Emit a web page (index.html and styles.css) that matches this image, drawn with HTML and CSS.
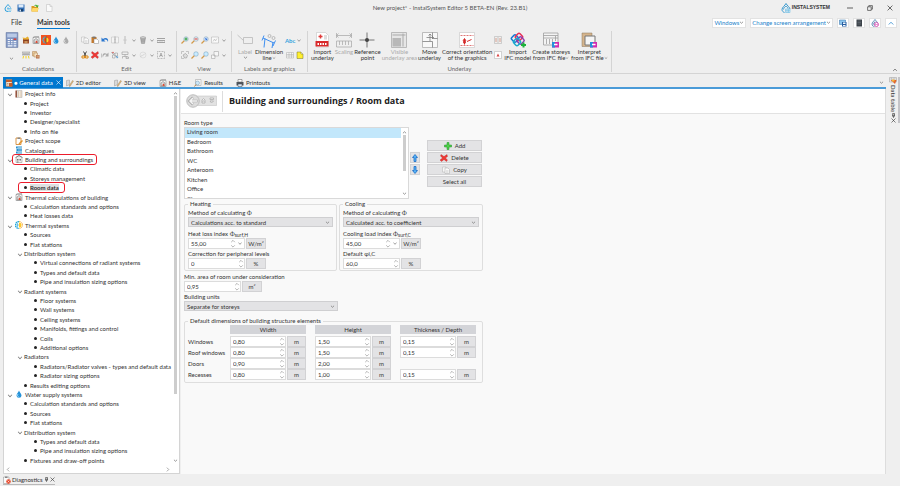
FILE: index.html
```html
<!DOCTYPE html>
<html lang="en">
<head>
    <meta charset="UTF-8">
    <meta name="viewport" content="width=device-width, initial-scale=1.0">
    <title>New project* - InstalSystem Editor 5</title>
    <link rel="stylesheet" href="styles.css">
</head>
<body>
    <svg class="sprite" aria-hidden="true">
        <symbol id="caret" viewBox="0 0 8 8"><path d="M1.5 2.8L4 5.2 6.500 2.800" fill="none" stroke="#777" stroke-width="1.200"/></symbol>
        <symbol id="caret-up" viewBox="0 0 8 8"><path d="M1.500 5.200L4 2.800 6.500 5.200" fill="none" stroke="#777" stroke-width="1.200"/></symbol>
        <symbol id="close" viewBox="0 0 10 10"><path d="M1 1l8 8M9 1L1 9" fill="none" stroke="currentColor" stroke-width="1.200"/></symbol>
        <symbol id="pin" viewBox="0 0 8 10"><path d="M2 1h4v5H2zM1 6h6M4 6v4M5 1v5" fill="none" stroke="#444" stroke-width="1.200"/></symbol>
        <symbol id="spin" viewBox="0 0 6 10"><path d="M1 3.500L3 1.500 5 3.500M1 7L3 9 5 7" fill="none" stroke="#999" stroke-width=".8"/></symbol>
        <symbol id="save" viewBox="0 0 16 16"><path d="M1 1h14v14H1z" fill="#2f6db5"/><path d="M3 1h10v6H3z" fill="#dcebfa"/><path d="M4 10h8v5H4z" fill="#16406f"/><path d="M5 11h3v4H5z" fill="#cfe0f2"/></symbol>
        <symbol id="folder" viewBox="0 0 16 16"><path d="M1 4h5l2 2h6v9H1z" fill="#d99a1e"/><path d="M3 8h13l-3 7H1z" fill="#ffd869"/><path d="M6 4c2-4 6-3 7-1l2-1-1 5-5-2 2-1c-1-1-3-1-5 0z" fill="#4caf2f"/></symbol>
        <symbol id="page" viewBox="0 0 16 16"><path d="M3 1h7l4 4v10H3z" fill="#fafafa" stroke="#bbb"/><path d="M10 1v4h4" fill="none" stroke="#bbb"/></symbol>
        <symbol id="app" viewBox="0 0 16 16"><path d="M8 1C5 5 2 7 2 10a5.500 5 0 0 0 6 5M8 1c2 3 4 4 5 6" fill="none" stroke="#2d9fdc" stroke-width="2"/><path d="M6 9h9M9 12h6M8 15h6M8 6v6" stroke="#49b4e8" stroke-width="1.300" fill="none"/></symbol>
        <symbol id="logo" viewBox="0 0 20 20"><path d="M10 1C8 5 2 9 2 13c0 3 2 5 5 6M10 1c2 4 8 8 8 11M5 13c0-3 3-5 5-7 2 2 4 3 4 5" fill="none" stroke="#2590cb" stroke-width="1.800"/><path d="M9 12h9v7H9zM12 12v7M15 12v7M9 15.500h9" fill="none" stroke="#53b5e4"/></symbol>
        <symbol id="calc" viewBox="0 0 24 30"><path d="M1 1h22v28H1z" fill="#7f96c4" stroke="#5e719b"/><path d="M3 3h18v7H3z" fill="#b9c9e6"/><path d="M4 13h4v2H4zM10 13h3v2h-3zM4 17h4v2H4zM10 17h3v2h-3zM15 17h5v2h-5zM4 21h4v2H4zM10 21h3v2h-3zM15 21h5v2h-5zM4 25h9v2H4zM15 25h5v2h-5z" fill="#f4f7fc"/><path d="M15 12h5v3h-5z" fill="#d4453b"/></symbol>
        <symbol id="boiler" viewBox="0 0 16 16"><path d="M2 6h12v9H2z" fill="#a0522d"/><path d="M1 3l6 1 4-3 3 3-1 3H3z" fill="#e7af31"/><path d="M3 9h10" stroke="#6d2f16"/><path d="M5 11h6v2H5z" fill="#f3d086"/></symbol>
        <symbol id="house" viewBox="0 0 16 16"><path d="M2 5l6-4 6 4v10H2z" fill="#eee" stroke="#888"/><path d="M4 8h3v3H4zM9 8h3v3H9zM4 13h3v2H4z" fill="#777"/><path d="M1 5l7-4 7 4" stroke="#6c6c6c" fill="none" stroke-width="1.500"/></symbol>
        <symbol id="house-red" viewBox="0 0 16 16"><path d="M2 3h12v12H2z" fill="#f6f6f6" stroke="#777"/><path d="M4 8l4-3 4 3v6H4z" fill="#ddd" stroke="#666"/><path d="M9 9c3 3 3 5 0 5s-3-2 0-5" fill="#df4630"/><path d="M2 3l3-2h9" stroke="#777" fill="none"/></symbol>
        <symbol id="sun" viewBox="0 0 16 16"><path d="M8 1a7 7 0 0 0 0 14" fill="none" stroke="#21a8dc" stroke-width="3" stroke-dasharray="3 1"/><path d="M8 3a5 5 0 0 1 0 10z" fill="#ffc928"/><path d="M8 1a7 7 0 0 1 0 14" fill="none" stroke="#f49b1b" stroke-width="2" stroke-dasharray="2 1"/><path d="M3 8h5M5 4v8" stroke="#1597cc"/></symbol>
        <symbol id="thermal" viewBox="0 0 16 16"><path d="M8 2a6 6 0 0 0 0 12" fill="none" stroke="#35bfe6" stroke-width="2.500" stroke-dasharray="3 1"/><path d="M8 3a5 5 0 0 1 0 10z" fill="#ffd92e"/><path d="M8 1v14" stroke="#5b3b22" stroke-width="1.500"/></symbol>
        <symbol id="drop" viewBox="0 0 16 16"><path d="M8 1c1 4 5 6 5 10a5 4.500 0 0 1-10 0c0-4 4-6 5-10z" fill="#2492d9"/><path d="M6 8c-2 3-1 5 1 5" fill="none" stroke="#c7ecff" stroke-width="1.500"/></symbol>
        <symbol id="drop-grey" viewBox="0 0 16 16"><path d="M8 1c1 4 5 6 5 10a5 4.500 0 0 1-10 0c0-4 4-6 5-10z" fill="#aaa"/><path d="M6 8c-2 3-1 5 1 5" fill="none" stroke="#eee" stroke-width="1.500"/></symbol>
        <symbol id="printer2" viewBox="0 0 16 16"><path d="M0 2h16v6H0z" fill="#d8d8d8" stroke="#888"/><path d="M2 6h12" stroke="#666"/><path d="M3 10l-1 5M8 10v5M13 10l1 5" stroke="#f3d11c" stroke-width="2"/></symbol>
        <symbol id="layers" viewBox="0 0 16 16"><path d="M1 1h8v9H1z" fill="#eacb9b" stroke="#a97c4a"/><path d="M4 4h7v8H4z" fill="#f5e1c1" stroke="#a97c4a"/><path d="M8 8h7v7H8z" fill="#b56d45"/><path d="M9 10h5M9 12h5" stroke="#f3d9b2"/></symbol>
        <symbol id="copy" viewBox="0 0 16 16"><path d="M1 2h7v10H1z" fill="#f6f6f6" stroke="#b2b2b2"/><path d="M6 4h6l3 3v8H6z" fill="#fafafa" stroke="#a8a8a8"/><path d="M8 9h5M8 11h5M8 13h5" stroke="#ccc"/></symbol>
        <symbol id="paste" viewBox="0 0 16 16"><path d="M1 2h10v12H1z" fill="#c57a2d"/><path d="M3 1h6v3H3z" fill="#777"/><path d="M6 6h6l3 3v6H6z" fill="#fff" stroke="#888"/></symbol>
        <symbol id="undo" viewBox="0 0 16 16"><path d="M1 3v8h8L6 8c3-2 6-1 8 4 2-8-5-10-10-6z" fill="#2b77cf"/></symbol>
        <symbol id="mirror" viewBox="0 0 16 16"><path d="M1 2h6v12H1zM9 2h6v12H9z" fill="#f4f4f4" stroke="#bbb"/><path d="M8 0v16" stroke="#888" stroke-dasharray="2 1"/></symbol>
        <symbol id="split" viewBox="0 0 16 16"><path d="M8 0v6M8 10v6M5 8h6" stroke="#aaa" stroke-width="1.500"/><circle cx="8" cy="8" r="2" fill="#ccc"/></symbol>
        <symbol id="bucket" viewBox="0 0 16 16"><path d="M3 4h10l-2 11H5z" fill="#b9b9b9" stroke="#888"/><path d="M2 3l6-2 6 2M6 6v7M10 6v7" fill="none" stroke="#777"/></symbol>
        <symbol id="lines" viewBox="0 0 16 16"><path d="M0 5h16M0 9h16M0 13h16" stroke="#888" stroke-width="1.500"/><path d="M1 9v4M6 9v4M10 9v4M15 9v4" stroke="#aaa"/></symbol>
        <symbol id="cut" viewBox="0 0 16 16"><path d="M5 1l5 9M11 1L6 10" stroke="#444" stroke-width="2"/><path d="M2 10h5v4H2zM9 10h5v4H9z" fill="none" stroke="#df8b17" stroke-width="2"/></symbol>
        <symbol id="delete" viewBox="0 0 16 16"><path d="M2 1l6 4 6-4 1 4-4 3 4 4-2 3-5-4-5 4-3-3 5-4-4-4z" fill="#ee3835" stroke="#a91414" stroke-width=".6"/></symbol>
        <symbol id="redo" viewBox="0 0 16 16"><path d="M15 3v8H8l3-3C8 6 5 7 4 13 1 7 6 2 12 6z" fill="#aaa"/><path d="M1 5v8" stroke="#999"/></symbol>
        <symbol id="select" viewBox="0 0 16 16"><path d="M1 3l6 2-2 2zM8 4h5v6H8zM3 8h5v6H3z" fill="#f2f2f2" stroke="#888"/><path d="M9 9l6 3-3 3z" fill="#5a9bcf"/><circle cx="4" cy="3" r="1.500" fill="#d9534f"/></symbol>
        <symbol id="connect" viewBox="0 0 16 16"><path d="M2 2h12v5H2zM8 7v4M3 11h10M3 11v4M10 12h5v3h-5z" fill="none" stroke="#999" stroke-width="1.200"/></symbol>
        <symbol id="round" viewBox="0 0 16 16"><circle cx="8" cy="8" r="6" fill="none" stroke="#ccc"/><path d="M3 12c2-5 5-1 9-7" fill="none" stroke="#bbb"/></symbol>
        <symbol id="area" viewBox="0 0 16 16"><path d="M1 1h14v14H1z" fill="none" stroke="#888" stroke-dasharray="2 1"/><path d="M5 12l3-8 3 8M6 9h4" fill="none" stroke="#777"/></symbol>
        <symbol id="zoom-in" viewBox="0 0 16 16"><path d="M7 9l-6 6" stroke="#d29a4b" stroke-width="2.500"/><circle cx="10" cy="6" r="4.500" fill="#d9eefb" stroke="#7d99ad"/><path d="M10 3v6M7 6h6" stroke="#2e9d35" stroke-width="2"/></symbol>
        <symbol id="zoom-out" viewBox="0 0 16 16"><path d="M7 9l-6 6" stroke="#d29a4b" stroke-width="2.500"/><circle cx="10" cy="6" r="4.500" fill="#e8eef3" stroke="#7d99ad"/><path d="M7 6h6" stroke="#d83b34" stroke-width="2"/></symbol>
        <symbol id="zoom-win" viewBox="0 0 16 16"><path d="M7 9l-6 6" stroke="#d29a4b" stroke-width="2.500"/><circle cx="10" cy="6" r="4.500" fill="#cfe4ff" stroke="#7d99ad"/><path d="M8 4l5 2-3 3z" fill="#2464cf"/></symbol>
        <symbol id="zoom-all" viewBox="0 0 16 16"><path d="M7 9l-6 6" stroke="#d29a4b" stroke-width="2.500"/><circle cx="10" cy="6" r="4.500" fill="#c9ebff" stroke="#6f9cba"/></symbol>
        <symbol id="frame" viewBox="0 0 16 16"><path d="M1 2h14v12H1z" fill="#fafafa" stroke="#aaa"/><path d="M4 11l3-5 2 4 3-5" fill="none" stroke="#aaa"/></symbol>
        <symbol id="hand" viewBox="0 0 16 16"><path d="M1 6V1h5M10 1h5v5M1 10v5h5" fill="none" stroke="#999"/><path d="M4 8l5-3 4 4-2 5H7z" fill="#ddd" stroke="#888"/></symbol>
        <symbol id="squares" viewBox="0 0 16 16"><path d="M6 1h9v9H6zM1 8h7v7H1z" fill="#f6f6f6" stroke="#999"/></symbol>
        <symbol id="label" viewBox="0 0 32 32"><path d="M13 11h18v12H13zM13 17L1 6" fill="none" stroke="#b5b5b5" stroke-width="1.500"/></symbol>
        <symbol id="dimension" viewBox="0 0 32 32"><path d="M4 12l22 10M6 7L2 17M29 17l-5 11M8 13l-2 18M24 20l-2 12" fill="none" stroke="#3f8ff0" stroke-width="2"/><circle cx="17" cy="8" r="3" fill="none" stroke="#aaa" stroke-width="1.500"/><circle cx="25" cy="12" r="3" fill="none" stroke="#aaa" stroke-width="1.500"/></symbol>
        <symbol id="grid" viewBox="0 0 16 16"><path d="M1 3h14v11H1zM1 7h14M1 10h14M6 3v11M11 3v11" fill="#f7f7f7" stroke="#aaa"/></symbol>
        <symbol id="note" viewBox="0 0 16 16"><path d="M2 2h8l4 4v9H2z" fill="#fff02f" stroke="#77732d"/><path d="M10 2v4h4" fill="#fff" stroke="#77732d"/></symbol>
        <symbol id="import" viewBox="0 0 32 32"><path d="M5 1h18l6 6v23H5z" fill="#fff" stroke="#bbb"/><path d="M3 18h26v11H3z" fill="#d9292b"/><path d="M7 24h18" stroke="#fff" stroke-width="4" stroke-dasharray="3 2"/><path d="M9 9h8M13 5v8" stroke="#e03c3c" stroke-width="3"/><path d="M20 6h6v9h-6z" fill="#ddd"/></symbol>
        <symbol id="scaling" viewBox="0 0 32 32"><path d="M1 7h30M1 2v10M31 2v10M5 3L1 7l4 4M27 3l4 4-4 4M1 18h30v12H1zM7 18v8M13 18v8M19 18v8M25 18v8" fill="none" stroke="#aaa" stroke-width="1.500"/></symbol>
        <symbol id="refpoint" viewBox="0 0 32 32"><path d="M16 1v30M1 16h30" stroke="#777" stroke-width="2"/><circle cx="16" cy="16" r="4" fill="#444"/></symbol>
        <symbol id="visible" viewBox="0 0 32 32"><path d="M1 1h30v30H1z" fill="#e6e6e6" stroke="#aaa" stroke-width="1.500"/><path d="M3 12h17v17H3z" fill="#b8b8b8"/><path d="M3 6h26M24 3v26" stroke="#aaa" stroke-width="2"/></symbol>
        <symbol id="move" viewBox="0 0 32 32"><path d="M1 1h30v30H1z" fill="#f8f8f8" stroke="#aaa" stroke-width="1.500"/><path d="M1 19h20v12M21 1v12h10M16 4v14M9 11h14M13 7l3-3 3 3M20 8l3 3-3 3" fill="none" stroke="#777" stroke-width="1.500"/></symbol>
        <symbol id="orient" viewBox="0 0 32 32"><path d="M1 1h30v30H1z" fill="#fff" stroke="#bbb"/><path d="M3 7h26M3 27h26" stroke="#df7777" stroke-width="2" stroke-dasharray="4 2"/><path d="M11 25V14M8 18l3-5 3 5M16 19l9-4" fill="none" stroke="#d42828" stroke-width="2"/><circle cx="11" cy="20" r="3" fill="#d42828"/></symbol>
        <symbol id="redpage" viewBox="0 0 16 16"><path d="M1 1h14v14H1z" fill="#f1efee" stroke="#aaa"/><path d="M4 4v8M12 4v8" stroke="#c98470" stroke-width="1.500"/><path d="M8 2v12" stroke="#999"/></symbol>
        <symbol id="redpoint" viewBox="0 0 16 16"><path d="M1 1h14v14H1z" fill="#fff" stroke="#aaa"/><path d="M5 11l3-6 3 6z" fill="#d84545"/></symbol>
        <symbol id="ifc" viewBox="0 0 32 32"><g fill="none" stroke-width="3"><rect x="4" y="7" width="12" height="12" rx="3" transform="rotate(45 10 13)" stroke="#1478d4"/><rect x="12" y="4" width="12" height="12" rx="3" transform="rotate(45 18 10)" stroke="#e72e56"/><rect x="15" y="11" width="12" height="12" rx="3" transform="rotate(45 21 17)" stroke="#8e3eb2"/><rect x="8" y="14" width="12" height="12" rx="3" transform="rotate(45 14 20)" stroke="#18aacb"/></g><path d="M27 21v10M22 26h10" stroke="#1cb33b" stroke-width="4"/></symbol>
        <symbol id="storeys" viewBox="0 0 32 32"><path d="M1 2h29v24H1z" fill="#f4f4f4" stroke="#999" stroke-width="1.500"/><path d="M1 7h29M1 12h29M7 14v10M13 14v10M19 14v10M25 8v10" stroke="#999" stroke-width="1.500"/><path d="M18 20h14v11H18z" fill="#d12cb0"/><path d="M18 20h6v11h-6z" fill="#278fd9"/><path d="M22 25h7" stroke="#fff" stroke-width="3"/></symbol>
        <symbol id="interpret" viewBox="0 0 32 32"><path d="M2 2h20v27H2z" fill="#d5b48c" stroke="#8a745b"/><path d="M8 8h20v18H8z" fill="#f5f5f5" stroke="#777" stroke-width="2"/><path d="M18 20h14v11H18z" fill="#d12cb0"/><path d="M18 20h6v11h-6z" fill="#278fd9"/><path d="M22 25h7" stroke="#fff" stroke-width="3"/></symbol>
        <symbol id="screen" viewBox="0 0 16 16"><path d="M1 2h12v9H1z" fill="#8dc5ed" stroke="#2c6ca7"/><path d="M6 6h9v9H6z" fill="#275ea0"/><path d="M8 7h5v3H8zM8 12h5v2H8z" fill="#eef6fd"/></symbol>
        <symbol id="dark" viewBox="0 0 16 16"><path d="M3 1h11v14H3z" fill="#3b4148"/><path d="M5 4h7M5 7h7M5 10h7" stroke="#78828b"/></symbol>
        <symbol id="appinfo" viewBox="0 0 16 16"><path d="M8 1C6 4 2 7 2 10s2 5 5 5M8 1c2 3 5 5 5 8M8 5l-3 5 3 3" fill="none" stroke="#2d6aa0" stroke-width="1.500"/><circle cx="11" cy="11" r="4" fill="#fff" stroke="#cb2aa0" stroke-width="1.500"/><path d="M8 11h6" stroke="#cb2aa0"/></symbol>
        <symbol id="tab-data" viewBox="0 0 16 16"><path d="M2 1h12v14H2z" fill="#f2e2cf" stroke="#9c5f35"/><path d="M2 2h12v4H2zM8 8h7v7H8z" fill="#c35f2c"/><path d="M4 9h3M4 12h3" stroke="#805030"/></symbol>
        <symbol id="draw" viewBox="0 0 16 16"><path d="M1 3l6-1v9l-6 3z" fill="#d9d9d9" stroke="#999"/><path d="M6 14l7-11 2 1-7 11z" fill="#e4bb7b" stroke="#8b6e45" stroke-width=".7"/></symbol>
        <symbol id="report" viewBox="0 0 16 16"><path d="M3 1h11v12H3z" fill="#fafafa" stroke="#999"/><circle cx="7" cy="8" r="4" fill="#cfe8f8" stroke="#7799ae"/><path d="M4 11l-3 4" stroke="#b98746" stroke-width="2"/></symbol>
        <symbol id="print" viewBox="0 0 16 16"><path d="M4 1h8v5H4z" fill="#fff" stroke="#555"/><path d="M1 6h14v7H1z" fill="#50565d"/><path d="M4 10h8v5H4z" fill="#dbe8f6" stroke="#444"/></symbol>
        <symbol id="book" viewBox="0 0 16 16"><path d="M1 1h3v14H1z" fill="#8b3b20"/><path d="M4 1h10v14H4z" fill="#f0e9df" stroke="#aaa"/><path d="M7 2v12M12 2v12" stroke="#caa984"/></symbol>
        <symbol id="scope" viewBox="0 0 16 16"><path d="M2 2h10v13H2z" fill="#fff" stroke="#d28b37" stroke-width="1.800"/><path d="M5 1h5v3H5z" fill="#888"/><path d="M7 13l7-7 2 2-7 7z" fill="#e0912a"/></symbol>
        <symbol id="catalog" viewBox="0 0 16 16"><path d="M2 1h12v4H2zM3 6h11v4H3zM2 11h12v4H2z" fill="#298fce"/><path d="M5 3h9M6 8h8M5 13h9" stroke="#e8f6ff"/></symbol>
        <symbol id="diag" viewBox="0 0 16 16"><path d="M1 2h11v13H1z" fill="#fafafa" stroke="#888"/><path d="M4 1h5v3H4z" fill="#888"/><circle cx="11" cy="11" r="4.500" fill="#e84a2e"/><path d="M9 9l4 4M13 9l-4 4" stroke="#fff"/></symbol>
        <symbol id="table-flame" viewBox="0 0 16 16"><path d="M1 1h14v9H1z" fill="#eee" stroke="#999"/><path d="M1 4h14M5 1v9M10 1v9" stroke="#aaa"/><path d="M3 6h12l-3 8-4-4z" fill="#e2622a"/><path d="M6 5h5v4H6z" fill="#f6b73c"/></symbol>
        <symbol id="plus" viewBox="0 0 16 16"><path d="M6 1h4v5h5v4h-5v5H6v-5H1V6h5z" fill="#4ed04a" stroke="#1f8f25"/></symbol>
        <symbol id="arrow-up" viewBox="0 0 16 16"><path d="M8 1l5 6h-3v8H6V7H3z" fill="#55b4f5" stroke="#1666c4" stroke-width="1.500"/></symbol>
        <symbol id="arrow-down" viewBox="0 0 16 16"><path d="M8 15l5-6h-3V1H6v8H3z" fill="#55b4f5" stroke="#1666c4" stroke-width="1.500"/></symbol>
        <symbol id="nav" viewBox="0 0 62 28"><path d="M14 4h47v19H14z" fill="#e2e2e2" stroke="#bbb"/><circle cx="14" cy="14" r="12.500" fill="#dcdcdc" stroke="#bdbdbd" stroke-width="2"/><path d="M23 14H8M14 7l-7 7 7 7" fill="none" stroke="#aaa" stroke-width="5"/><path d="M22 14H9M14 8l-6 6 6 6" fill="none" stroke="#f4f4f4" stroke-width="3"/><path d="M31 13l4-4 4 4M32 18h6v-4h-6zM48 8h7v3h-7zM48 14l3 4 4-4z" fill="#f4f4f4" stroke="#aaa" stroke-width="1.500"/></symbol>
    </svg>

    <header class="titlebar">
        <div class="quick">
            <svg class="icon"><use href="#app"/></svg>
            <button class="tool" aria-label="Save"><svg class="icon"><use href="#save"/></svg></button>
            <button class="tool" aria-label="Open"><svg class="icon"><use href="#folder"/></svg></button>
            <button class="tool" aria-label="New"><svg class="icon"><use href="#page"/></svg></button>
        </div>
        <span class="window-title">New project* - InstalSystem Editor 5 BETA-EN (Rev. 23.B1)</span>
        <div class="window-side">
            <span class="brand"><svg class="icon-10"><use href="#logo"/></svg>INSTALSYSTEM</span>
            <button class="win-btn" aria-label="Minimize"><svg class="icon-6" viewBox="0 0 10 10"><path d="M0 5h10" stroke="#444" stroke-width="1.400"/></svg></button>
            <button class="win-btn" aria-label="Restore"><svg class="icon-6" viewBox="0 0 10 10"><path d="M1 3h6v6H1zM3 3V1h6v6H7" fill="none" stroke="#444" stroke-width="1.200"/></svg></button>
            <button class="win-btn" aria-label="Close"><svg class="icon-6"><use href="#close"/></svg></button>
        </div>
    </header>

    <nav class="menubar">
        <a class="menu" href="#">File</a>
        <a class="menu active" href="#">Main tools</a>
        <div class="menu-right">
            <button class="chip">Windows<svg class="icon-5"><use href="#caret"/></svg></button>
            <button class="chip">Change screen arrangement<svg class="icon-5"><use href="#caret"/></svg></button>
            <button class="chip square" aria-label="Layout"><svg class="icon"><use href="#screen"/></svg></button>
            <button class="chip square" aria-label="Theme"><svg class="icon"><use href="#dark"/></svg></button>
            <button class="chip square" aria-label="About"><svg class="icon"><use href="#appinfo"/></svg></button>
            <button class="chip square" aria-label="Hide"><svg class="icon-6" viewBox="0 0 8 8"><path d="M1 6l3-3 3 3" fill="none" stroke="#1b7fca"/></svg></button>
        </div>
    </nav>

    <section class="ribbon">
        <div class="group calculations">
            <div class="group-body">
                <button class="big narrow" aria-label="Calculate"><svg class="icon-16"><use href="#calc"/></svg><svg class="icon-5 caret-gap"><use href="#caret"/></svg></button>
                <div class="small-tools">
                    <div class="small-row">
                        <button class="tool" aria-label="Boiler"><svg class="icon"><use href="#boiler"/></svg></button>
                        <button class="tool" aria-label="Heat losses"><svg class="icon"><use href="#house-red"/></svg></button>
                        <button class="tool checked" aria-label="Thermal"><svg class="icon"><use href="#thermal"/></svg></button>
                        <button class="tool" aria-label="Water"><svg class="icon"><use href="#drop"/></svg></button>
                        <button class="tool" aria-label="Sewage"><svg class="icon"><use href="#drop-grey"/></svg></button>
                    </div>
                    <div class="small-row">
                        <button class="tool" aria-label="Ventilation"><svg class="icon"><use href="#printer2"/></svg></button>
                        <button class="tool" aria-label="Options"><svg class="icon"><use href="#layers"/></svg></button>
                    </div>
                </div>
            </div>
            <span class="group-name">Calculations</span>
        </div>

        <div class="group edit">
            <div class="group-body">
                <div class="small-tools">
                    <div class="small-row">
                        <button class="tool" aria-label="Copy"><svg class="icon"><use href="#copy"/></svg></button>
                        <button class="tool" aria-label="Paste"><svg class="icon"><use href="#paste"/></svg></button>
                        <button class="tool" aria-label="Undo"><svg class="icon"><use href="#undo"/></svg></button>
                        <button class="tool" aria-label="Mirror"><svg class="icon"><use href="#mirror"/></svg></button>
                        <button class="tool" aria-label="Split"><svg class="icon"><use href="#split"/></svg></button>
                        <svg class="drop"><use href="#caret"/></svg>
                        <button class="tool" aria-label="Fill"><svg class="icon"><use href="#bucket"/></svg></button>
                        <svg class="drop"><use href="#caret"/></svg>
                        <button class="tool" aria-label="Lines"><svg class="icon"><use href="#lines"/></svg></button>
                    </div>
                    <div class="small-row">
                        <button class="tool" aria-label="Cut"><svg class="icon"><use href="#cut"/></svg></button>
                        <button class="tool" aria-label="Delete"><svg class="icon"><use href="#delete"/></svg></button>
                        <button class="tool" aria-label="Redo"><svg class="icon"><use href="#redo"/></svg></button>
                        <button class="tool" aria-label="Select"><svg class="icon"><use href="#select"/></svg></button>
                        <button class="tool" aria-label="Connect"><svg class="icon"><use href="#connect"/></svg></button>
                        <svg class="drop"><use href="#caret"/></svg>
                        <button class="tool" aria-label="Curve"><svg class="icon"><use href="#round"/></svg></button>
                        <svg class="drop"><use href="#caret"/></svg>
                        <button class="tool" aria-label="Area"><svg class="icon"><use href="#area"/></svg></button>
                        <svg class="drop"><use href="#caret"/></svg>
                    </div>
                </div>
            </div>
            <span class="group-name">Edit</span>
        </div>

        <div class="group view">
            <div class="group-body">
                <div class="small-tools">
                    <div class="small-row">
                        <button class="tool" aria-label="Zoom in"><svg class="icon"><use href="#zoom-in"/></svg></button>
                        <button class="tool" aria-label="Zoom out"><svg class="icon"><use href="#zoom-out"/></svg></button>
                        <button class="tool" aria-label="Zoom window"><svg class="icon"><use href="#zoom-win"/></svg></button>
                        <button class="tool" aria-label="Views"><svg class="icon"><use href="#frame"/></svg></button>
                        <svg class="drop"><use href="#caret"/></svg>
                    </div>
                    <div class="small-row">
                        <button class="tool" aria-label="Pan"><svg class="icon"><use href="#hand"/></svg></button>
                        <button class="tool" aria-label="Zoom page"><svg class="icon"><use href="#zoom-all"/></svg></button>
                        <button class="tool" aria-label="Zoom all"><svg class="icon"><use href="#zoom-all"/></svg></button>
                        <button class="tool" aria-label="Arrange"><svg class="icon"><use href="#squares"/></svg></button>
                        <svg class="drop"><use href="#caret"/></svg>
                    </div>
                </div>
            </div>
            <span class="group-name">View</span>
        </div>

        <div class="group labels">
            <div class="group-body">
                <button class="big" disabled><svg class="icon-16"><use href="#label"/></svg><span>Label</span><svg class="icon-5"><use href="#caret"/></svg></button>
                <button class="big"><svg class="icon-16"><use href="#dimension"/></svg><span>Dimension<br>line<svg class="icon-4"><use href="#caret"/></svg></span></button>
                <div class="small-tools">
                    <div class="small-row">
                        <button class="tool abc">Abc</button>
                        <svg class="drop"><use href="#caret"/></svg>
                    </div>
                    <div class="small-row">
                        <button class="tool" aria-label="Table"><svg class="icon"><use href="#grid"/></svg></button>
                        <button class="tool" aria-label="Note"><svg class="icon"><use href="#note"/></svg></button>
                    </div>
                </div>
            </div>
            <span class="group-name">Labels and graphics</span>
        </div>

        <div class="group underlay">
            <div class="group-body">
                <button class="big"><svg class="icon-16"><use href="#import"/></svg><span>Import<br>underlay</span></button>
                <button class="big" disabled><svg class="icon-16"><use href="#scaling"/></svg><span>Scaling</span></button>
                <button class="big"><svg class="icon-16"><use href="#refpoint"/></svg><span>Reference<br>point</span></button>
                <button class="big" disabled><svg class="icon-16"><use href="#visible"/></svg><span>Visible<br>underlay area</span></button>
                <button class="big"><svg class="icon-16"><use href="#move"/></svg><span>Move<br>underlay</span></button>
                <button class="big"><svg class="icon-16"><use href="#orient"/></svg><span>Correct orientation<br>of the graphics</span></button>
                <div class="small-tools">
                    <div class="small-row"><button class="tool" aria-label="Pages"><svg class="icon"><use href="#redpage"/></svg></button></div>
                    <div class="small-row"><button class="tool" aria-label="Point"><svg class="icon"><use href="#redpoint"/></svg></button></div>
                </div>
                <button class="big"><svg class="icon-16"><use href="#ifc"/></svg><span>Import<br>IFC model</span></button>
                <button class="big"><svg class="icon-16"><use href="#storeys"/></svg><span>Create storeys<br>from IFC file<svg class="icon-4"><use href="#caret"/></svg></span></button>
                <button class="big"><svg class="icon-16"><use href="#interpret"/></svg><span>Interpret<br>from IFC file<svg class="icon-4"><use href="#caret"/></svg></span></button>
            </div>
            <span class="group-name">Underlay</span>
        </div>
        <button class="collapse" aria-label="Collapse ribbon"><svg class="icon-6"><use href="#caret-up"/></svg></button>
    </section>

    <div class="workspace">
        <div class="document">
            <nav class="tabs">
                <a class="tab active" href="#"><svg class="icon"><use href="#tab-data"/></svg><span>● General data</span><svg class="icon-5 tab-close"><use href="#close"/></svg></a>
                <a class="tab" href="#"><svg class="icon"><use href="#draw"/></svg>2D editor</a>
                <a class="tab" href="#"><svg class="icon"><use href="#draw"/></svg>3D view</a>
                <a class="tab" href="#"><svg class="icon"><use href="#house-red"/></svg>H&amp;E</a>
                <a class="tab" href="#"><svg class="icon"><use href="#report"/></svg>Results</a>
                <a class="tab" href="#"><svg class="icon"><use href="#print"/></svg>Printouts</a>
                <svg class="icon-5 tabs-more"><use href="#caret"/></svg>
            </nav>

            <div class="panes">
                <aside class="tree-pane">
                    <div class="tree-body">
                        <ul class="tree">
                            <li class="root open"><svg class="icon"><use href="#book"/></svg>Project info</li>
                            <li class="leaf">Project</li>
                            <li class="leaf">Investor</li>
                            <li class="leaf">Designer/specialist</li>
                            <li class="leaf">Info on file</li>
                            <li class="root"><svg class="icon"><use href="#scope"/></svg>Project scope</li>
                            <li class="root"><svg class="icon"><use href="#catalog"/></svg>Catalogues</li>
                            <li class="root open marked"><svg class="icon"><use href="#house"/></svg>Building and surroundings</li>
                            <li class="leaf">Climatic data</li>
                            <li class="leaf">Storeys management</li>
                            <li class="leaf marked"><span class="current">Room data</span></li>
                            <li class="root open"><svg class="icon"><use href="#house-red"/></svg>Thermal calculations of building</li>
                            <li class="leaf">Calculation standards and options</li>
                            <li class="leaf">Heat losses data</li>
                            <li class="root open"><svg class="icon"><use href="#sun"/></svg>Thermal systems</li>
                            <li class="leaf">Sources</li>
                            <li class="leaf">Flat stations</li>
                            <li class="branch open">Distribution system</li>
                            <li class="leaf deep">Virtual connections of radiant systems</li>
                            <li class="leaf deep">Types and default data</li>
                            <li class="leaf deep">Pipe and insulation sizing options</li>
                            <li class="branch open">Radiant systems</li>
                            <li class="leaf deep">Floor systems</li>
                            <li class="leaf deep">Wall systems</li>
                            <li class="leaf deep">Ceiling systems</li>
                            <li class="leaf deep">Manifolds, fittings and control</li>
                            <li class="leaf deep">Coils</li>
                            <li class="leaf deep">Additional options</li>
                            <li class="branch open">Radiators</li>
                            <li class="leaf deep">Radiators/Radiator valves - types and default data</li>
                            <li class="leaf deep">Radiator sizing options</li>
                            <li class="leaf">Results editing options</li>
                            <li class="root open"><svg class="icon"><use href="#drop"/></svg>Water supply systems</li>
                            <li class="leaf">Calculation standards and options</li>
                            <li class="leaf">Sources</li>
                            <li class="leaf">Flat stations</li>
                            <li class="branch open">Distribution system</li>
                            <li class="leaf deep">Types and default data</li>
                            <li class="leaf deep">Pipe and insulation sizing options</li>
                            <li class="leaf">Fixtures and draw-off points</li>
                        </ul>
                        <div class="vscroll"><svg class="icon-5"><use href="#caret-up"/></svg><div class="thumb tree-thumb"></div><svg class="icon-5"><use href="#caret"/></svg></div>
                    </div>
                    <div class="hscroll">
                        <svg class="icon-5" viewBox="0 0 8 8"><path d="M5 1L2 4l3 3" fill="none" stroke="#777"/></svg>
                        <svg class="icon-5" viewBox="0 0 8 8"><path d="M3 1l3 3-3 3" fill="none" stroke="#777"/></svg>
                    </div>
                </aside>

                <main class="content">
                    <div class="content-head">
                        <button class="nav-btn" aria-label="Back"><svg class="nav-icon"><use href="#nav"/></svg></button>
                        <h1>Building and surroundings / Room data</h1>
                    </div>

                    <form class="form">
                        <label for="room-type">Room type</label>
                        <div class="room-row">
                            <div class="listbox">
                                <select id="room-type" size="8">
                                    <option selected>Living room</option>
                                    <option>Bedroom</option>
                                    <option>Bathroom</option>
                                    <option>WC</option>
                                    <option>Anteroom</option>
                                    <option>Kitchen</option>
                                    <option>Office</option>
                                    <option>Classroom</option>
                                </select>
                                <div class="vscroll"><svg class="icon-5"><use href="#caret-up"/></svg><div class="thumb list-thumb"></div><svg class="icon-5"><use href="#caret"/></svg></div>
                            </div>
                            <div class="order">
                                <button type="button" class="btn" aria-label="Move up"><svg class="icon"><use href="#arrow-up"/></svg></button>
                                <button type="button" class="btn" aria-label="Move down"><svg class="icon"><use href="#arrow-down"/></svg></button>
                            </div>
                            <div class="actions">
                                <button type="button" class="btn"><svg class="icon"><use href="#plus"/></svg>Add</button>
                                <button type="button" class="btn"><svg class="icon"><use href="#delete"/></svg>Delete</button>
                                <button type="button" class="btn"><svg class="icon"><use href="#copy"/></svg>Copy</button>
                                <button type="button" class="btn">Select all</button>
                            </div>
                        </div>

                        <div class="methods">
                            <fieldset class="heating">
                                <legend>Heating</legend>
                                <label for="heat-method">Method of calculating Φ</label>
                                <div class="combo"><select id="heat-method"><option>Calculations acc. to standard</option></select><svg class="icon-5"><use href="#caret"/></svg></div>
                                <label class="spaced" for="heat-loss">Heat loss index Φ<sub>surf,H</sub></label>
                                <div class="field"><div class="spin"><input id="heat-loss" value="55,00"><svg class="arrows"><use href="#spin"/></svg><svg class="drop"><use href="#caret"/></svg></div><button type="button" class="btn unit">W/m²</button></div>
                                <label for="correction">Correction for peripheral levels</label>
                                <div class="field"><div class="spin"><input id="correction" value="0"><svg class="arrows"><use href="#spin"/></svg></div><button type="button" class="btn unit">%</button></div>
                            </fieldset>
                            <fieldset class="cooling">
                                <legend>Cooling</legend>
                                <label for="cool-method">Method of calculating Φ</label>
                                <div class="combo"><select id="cool-method"><option>Calculated acc. to coefficient</option></select><svg class="icon-5"><use href="#caret"/></svg></div>
                                <label class="spaced" for="cool-load">Cooling load index Φ<sub>surf,C</sub></label>
                                <div class="field"><div class="spin"><input id="cool-load" value="45,00"><svg class="arrows"><use href="#spin"/></svg><svg class="drop"><use href="#caret"/></svg></div><button type="button" class="btn unit">W/m²</button></div>
                                <label for="default-phi">Default φi,C</label>
                                <div class="field"><div class="spin"><input id="default-phi" value="60,0"><svg class="arrows"><use href="#spin"/></svg></div><button type="button" class="btn unit">%</button></div>
                            </fieldset>
                        </div>

                        <label for="min-area">Min. area of room under consideration</label>
                        <div class="field"><div class="spin"><input id="min-area" value="0,95"><svg class="arrows"><use href="#spin"/></svg></div><button type="button" class="btn unit">m²</button></div>
                        <label for="units">Building units</label>
                        <div class="combo units"><select id="units"><option>Separate for storeys</option></select><svg class="icon-5"><use href="#caret"/></svg></div>

                        <fieldset class="dimensions">
                            <legend>Default dimensions of building structure elements</legend>
                            <table>
                                <thead>
                                    <tr><td></td><th scope="col">Width</th><th scope="col">Height</th><th scope="col">Thickness / Depth</th></tr>
                                </thead>
                                <tbody>
                                    <tr>
                                        <th scope="row">Windows</th>
                                        <td><div class="field"><div class="spin"><input aria-label="Windows width" value="0,80"><svg class="arrows"><use href="#spin"/></svg></div><button type="button" class="btn unit">m</button></div></td>
                                        <td><div class="field"><div class="spin"><input aria-label="Windows height" value="1,50"><svg class="arrows"><use href="#spin"/></svg></div><button type="button" class="btn unit">m</button></div></td>
                                        <td><div class="field"><div class="spin"><input aria-label="Windows depth" value="0,15"><svg class="arrows"><use href="#spin"/></svg></div><button type="button" class="btn unit">m</button></div></td>
                                    </tr>
                                    <tr>
                                        <th scope="row">Roof windows</th>
                                        <td><div class="field"><div class="spin"><input aria-label="Roof windows width" value="0,80"><svg class="arrows"><use href="#spin"/></svg></div><button type="button" class="btn unit">m</button></div></td>
                                        <td><div class="field"><div class="spin"><input aria-label="Roof windows height" value="1,50"><svg class="arrows"><use href="#spin"/></svg></div><button type="button" class="btn unit">m</button></div></td>
                                        <td><div class="field"><div class="spin"><input aria-label="Roof windows depth" value="0,15"><svg class="arrows"><use href="#spin"/></svg></div><button type="button" class="btn unit">m</button></div></td>
                                    </tr>
                                    <tr>
                                        <th scope="row">Doors</th>
                                        <td><div class="field"><div class="spin"><input aria-label="Doors width" value="0,90"><svg class="arrows"><use href="#spin"/></svg></div><button type="button" class="btn unit">m</button></div></td>
                                        <td><div class="field"><div class="spin"><input aria-label="Doors height" value="2,00"><svg class="arrows"><use href="#spin"/></svg></div><button type="button" class="btn unit">m</button></div></td>
                                        <td></td>
                                    </tr>
                                    <tr>
                                        <th scope="row">Recesses</th>
                                        <td><div class="field"><div class="spin"><input aria-label="Recesses width" value="0,80"><svg class="arrows"><use href="#spin"/></svg></div><button type="button" class="btn unit">m</button></div></td>
                                        <td><div class="field"><div class="spin"><input aria-label="Recesses height" value="1,00"><svg class="arrows"><use href="#spin"/></svg></div><button type="button" class="btn unit">m</button></div></td>
                                        <td><div class="field"><div class="spin"><input aria-label="Recesses depth" value="0,15"><svg class="arrows"><use href="#spin"/></svg></div><button type="button" class="btn unit">m</button></div></td>
                                    </tr>
                                </tbody>
                            </table>
                        </fieldset>
                    </form>
                </main>
            </div>
        </div>

        <aside class="side-strip">
            <div class="side-tab">
                <svg class="icon"><use href="#table-flame"/></svg>
                <span>Data table</span>
                <svg class="icon-5"><use href="#pin"/></svg>
                <svg class="icon-5"><use href="#close"/></svg>
            </div>
        </aside>
    </div>

    <footer class="statusbar">
        <div class="diagnostics">
            <svg class="icon"><use href="#diag"/></svg>
            <span>Diagnostics</span>
            <svg class="icon-5"><use href="#pin"/></svg>
            <svg class="icon-5"><use href="#close"/></svg>
        </div>
    </footer>
</body>
</html>
```
FILE: styles.css
```css
* {
    box-sizing: border-box;
}

body {
    margin: 0;
    height: 100vh;
    display: flex;
    flex-direction: column;
    overflow: hidden;
    font-family: Lato, "Open Sans", sans-serif;
    font-size: 6px;
    line-height: 7px;
    color: #333;
    background-color: #efefef;
}

button, input, select {
    font: inherit;
    color: inherit;
    margin: 0;
    padding: 0;
    border: none;
    background: none;
    border-radius: 0;
}

a {
    color: inherit;
    text-decoration: none;
}

svg {
    display: block;
    flex: none;
}

.sprite {
    position: absolute;
    width: 0;
    height: 0;
}

.icon {
    width: 8px;
    height: 8px;
}

.icon-4 {
    display: inline-block;
    width: 4px;
    height: 4px;
}

.icon-5 {
    width: 5px;
    height: 5px;
}

.icon-6 {
    width: 6px;
    height: 6px;
}

.icon-10 {
    width: 10px;
    height: 10px;
}

.icon-16 {
    width: 16px;
    height: 16px;
}

/* title bar */
.titlebar {
    display: grid;
    grid-template-columns: 1fr auto 1fr;
    align-items: center;
    height: 15px;
}

.window-title {
    color: #555;
}

.quick {
    display: flex;
    align-items: center;
    gap: 4px;
    padding-left: 4px;
}

.window-side {
    display: flex;
    justify-content: flex-end;
    align-items: center;
}

.brand {
    display: flex;
    align-items: center;
    gap: 1px;
    margin-right: 10px;
    font-family: "Liberation Sans", sans-serif;
    font-size: 5px;
    font-weight: bold;
}

.win-btn {
    display: flex;
    justify-content: center;
    width: 20px;
}

/* menu */
.menubar {
    display: flex;
    align-items: center;
    height: 15px;
    padding-left: 11px;
}

.menu {
    padding: 2px 0;
    margin-right: 15px;
    font-size: 7px;
    line-height: 8px;
    border-bottom: 1px solid transparent;
}

.menu.active {
    font-weight: bold;
    border-bottom-color: #0078d0;
}

.menu-right {
    display: flex;
    gap: 4px;
    margin-left: auto;
    padding-right: 3px;
}

.chip {
    display: flex;
    align-items: center;
    justify-content: center;
    height: 10px;
    padding: 0 1px;
    color: #1b7fca;
    background-color: white;
    border: 1px solid #e2e2e2;
}

.chip.square {
    width: 12px;
}

/* ribbon */
.ribbon {
    display: flex;
    height: 44px;
    padding-top: 1px;
    border-bottom: 1px solid #d4d4d4;
}

.group {
    display: flex;
    flex-direction: column;
    justify-content: space-between;
    height: 41px;
    padding: 1px 3px 0;
    border-right: 1px solid #d4d4d4;
}

.group-body {
    display: flex;
    align-items: flex-start;
    gap: 1px;
}

.group-name {
    text-align: center;
    color: #666;
}

.calculations {
    width: 77px;
}

.edit {
    width: 100px;
}

.view {
    width: 55px;
}

.labels {
    width: 76px;
}

.labels .group-body {
    gap: 2px;
    padding-left: 2px;
}

.big {
    display: flex;
    flex-direction: column;
    align-items: center;
    text-align: center;
    white-space: nowrap;
}

.big span {
    line-height: 6px;
    padding-top: 1px;
}

.big:disabled {
    color: #aaa;
}

.big .icon-4 {
    vertical-align: middle;
}

.narrow {
    width: 17px;
}

.caret-gap {
    margin-top: 8px;
}

.small-tools {
    display: flex;
    flex-direction: column;
    gap: 5px;
    padding-top: 3px;
}

.small-row {
    display: flex;
    align-items: center;
    height: 10px;
}

.tool {
    display: flex;
    align-items: center;
    justify-content: center;
    width: 10px;
    height: 10px;
}

.tool.checked {
    background-color: #f4511e;
}

.abc {
    font-weight: bold;
    color: #35a3de;
}

.drop {
    width: 8px;
    height: 5px;
}

.collapse {
    align-self: flex-end;
    margin-left: auto;
    padding: 0 2px 0 0;
}

/* workspace */
.workspace {
    flex: 1;
    min-height: 0;
    display: flex;
    padding: 3px 0 0 3px;
}

.document {
    flex: 1;
    min-width: 0;
    display: flex;
    flex-direction: column;
}

.tabs {
    display: flex;
    height: 12px;
    border-bottom: 2px solid #4a9bd8;
}

.tab {
    display: flex;
    align-items: center;
    gap: 2px;
    height: 11px;
    padding: 0 10px 0 3px;
}

.tab.active {
    gap: 1px;
    padding: 0 2px;
    color: white;
    background-color: #0078d0;
}

.tab-close {
    margin-left: 2px;
}

.tabs-more {
    margin: 3px 2px 0 auto;
}

.panes {
    flex: 1;
    min-height: 0;
    display: flex;
    gap: 1px;
}

.tree-pane {
    width: 177px;
    display: flex;
    flex-direction: column;
    background-color: white;
    border: 1px solid #d4d4d4;
    border-top: none;
}

.tree-body {
    flex: 1;
    min-height: 0;
    display: flex;
}

.tree {
    flex: 1;
    display: grid;
    grid-auto-rows: 1fr;
    margin: 0;
    padding: 0 0 0 2px;
    list-style: none;
    white-space: nowrap;
}

.tree li {
    position: relative;
    display: flex;
    align-items: center;
    justify-self: start;
    min-height: 0;
}

.root {
    gap: 2px;
    padding-left: 9px;
}

.branch {
    padding-left: 18px;
}

.leaf {
    padding-left: 18px;
}

.leaf.deep {
    padding-left: 28px;
}

.leaf::before {
    content: "";
    width: 3px;
    height: 3px;
    margin-right: 3px;
    border-radius: 50%;
    background-color: #222;
}

.open::before {
    content: "";
    position: absolute;
    left: 2px;
    top: 3px;
    width: 3px;
    height: 3px;
    border: solid #777;
    border-width: 0 1px 1px 0;
    transform: rotate(45deg) scale(0.8);
}

.branch.open::before {
    left: 12px;
}

.current {
    font-weight: bold;
    background-color: #e0e0e0;
}

/* red frame around the highlighted entries */
.marked::after {
    content: "";
    position: absolute;
    inset: -1px -4px -1px 6px;
    border: 1px solid #ec1c2b;
    border-radius: 3px;
}

.leaf.marked::after {
    left: 12px;
    right: -6px;
}

.vscroll {
    display: flex;
    flex-direction: column;
    align-items: center;
    width: 7px;
    padding: 2px 0;
    background-color: white;
}

.vscroll .icon-5:last-child {
    margin-top: auto;
}

.thumb {
    width: 3px;
    background-color: #cdcdcd;
}

.tree-thumb {
    height: 80%;
}

.list-thumb {
    height: 36px;
}

.hscroll {
    display: flex;
    align-items: center;
    justify-content: space-between;
    height: 8px;
    padding: 0 9px 0 2px;
}

.content {
    flex: 1;
    min-width: 0;
    background-color: #f9f9f9;
    border-right: 1px solid #ddd;
}

.content-head {
    display: flex;
    align-items: center;
    height: 25px;
    background-color: white;
    border-bottom: 1px solid #e2e2e2;
}

.nav-btn {
    height: 21px;
    padding: 0 5px;
    border-right: 1px solid #ddd;
}

.nav-icon {
    width: 31px;
    height: 14px;
}

h1 {
    margin: 0 0 0 6px;
    font-family: "Open Sans", sans-serif;
    font-size: 9px;
    line-height: 12px;
    color: #222;
}

.form {
    display: flex;
    flex-direction: column;
    align-items: flex-start;
    padding: 4px 3px;
}

.form label {
    line-height: 9px;
}

.room-row {
    display: flex;
}

.listbox {
    display: flex;
    width: 225px;
    height: 72px;
    border: 1px solid #d9d9d9;
    background-color: white;
}

.listbox select {
    flex: 1;
    height: 70px;
    overflow: hidden;
    outline: none;
}

.listbox option {
    height: 9px;
    min-height: 9px;
    padding: 0 2px;
    line-height: 9px;
}

.listbox option:nth-child(odd) {
    height: 10px;
    line-height: 10px;
}

.listbox option:checked {
    color: #333;
    background: #c2e7fb linear-gradient(#c2e7fb, #c2e7fb);
}

.order {
    display: flex;
    flex-direction: column;
    gap: 1px;
    padding: 25px 7px 0 1px;
}

.order .btn {
    width: 10px;
}

.btn {
    display: flex;
    align-items: center;
    justify-content: center;
    gap: 3px;
    height: 11px;
    background-color: #e3e3e5;
    border: 1px solid #d2d2d4;
}

.actions {
    display: flex;
    flex-direction: column;
    gap: 1px;
    width: 55px;
    padding-top: 13px;
}

fieldset {
    margin: 0;
    padding: 0 3px 2px;
    border: 1px solid #dedede;
    border-radius: 2px;
}

legend {
    padding: 0 2px;
    line-height: 8px;
}

.methods {
    display: flex;
    gap: 2px;
    padding: 1px 0;
}

.methods fieldset {
    display: flex;
    flex-direction: column;
    align-items: flex-start;
    padding-bottom: 1px;
}

.heating {
    width: 153px;
}

.cooling {
    width: 144px;
}

.combo {
    display: flex;
    align-items: center;
    width: 100%;
    height: 10px;
    padding-right: 2px;
    background-color: #e3e3e5;
    border: 1px solid #cfcfd1;
}

.combo select {
    flex: 1;
    appearance: none;
    padding-left: 2px;
}

.combo.units {
    width: 154px;
}

.form .spaced {
    padding-top: 2px;
}

sub {
    font-size: 5px;
    line-height: 0;
    vertical-align: -1px;
}

.field {
    display: flex;
    gap: 1px;
}

.spin {
    display: flex;
    align-items: center;
    width: 57px;
    height: 11px;
    background-color: white;
    border: 1px solid #dcdcdc;
}

.spin input {
    flex: 1;
    min-width: 0;
    padding-left: 2px;
}

.arrows {
    width: 6px;
    height: 9px;
}

.unit {
    width: 20px;
}

.dimensions {
    width: 299px;
    margin-top: 6px;
}

table {
    border-spacing: 0;
}

td, th {
    padding: 0;
    font-weight: normal;
}

tbody th {
    width: 42px;
    text-align: left;
    white-space: nowrap;
}

td .spin {
    width: 56px;
}

td .unit {
    width: 19px;
}

td .field {
    margin-right: 9px;
}

thead th {
    height: 9px;
    border-right: 9px solid #f9f9f9;
    background-color: #d3d4d8;
}

td:last-child .field {
    margin-right: 0;
}

thead th:last-child {
    border-right: none;
}

tbody tr:first-child td,
tbody tr:first-child th {
    padding-top: 2px;
}

/* right strip */
.side-strip {
    width: 14px;
    padding-left: 2px;
}

.side-tab {
    display: flex;
    flex-direction: column;
    align-items: center;
    height: 46px;
    border-right: 2px solid #c4c4c8;
}

.side-tab span {
    padding-bottom: 1px;
    writing-mode: vertical-rl;
    white-space: nowrap;
}

/* status bar */
.statusbar {
    height: 12px;
    padding: 1px 3px 0;
}

.diagnostics {
    display: inline-flex;
    align-items: center;
    gap: 1px;
    height: 10px;
    border-bottom: 1px solid #b9b9b9;
}
```
